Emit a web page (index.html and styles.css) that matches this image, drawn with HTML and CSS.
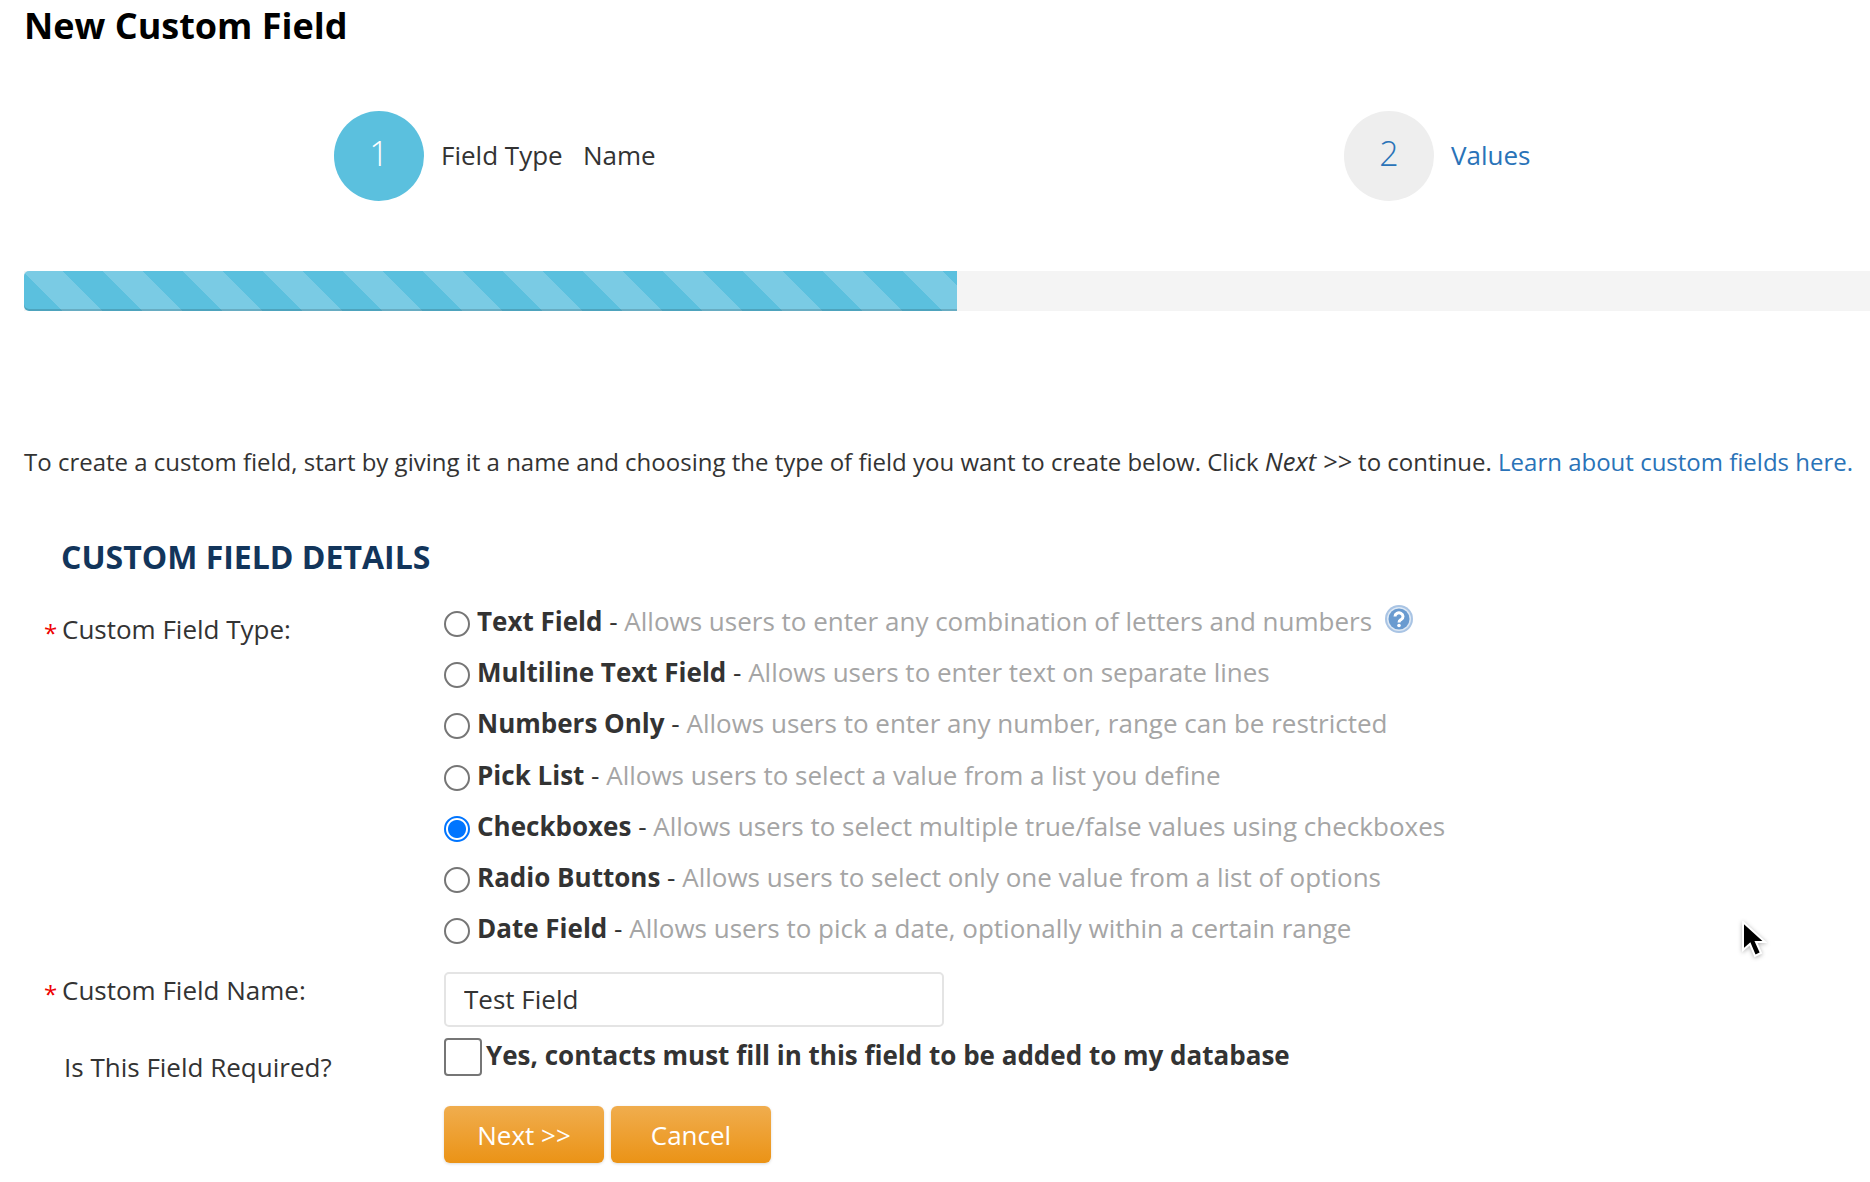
FILE: index.html
```html
<!DOCTYPE html>
<html lang="en">
<head>
  <meta charset="UTF-8">
  <meta name="viewport" content="width=device-width, initial-scale=1.0">
  <title>New Custom Field</title>
  <link rel="stylesheet" href="styles.css">
</head>
<body>
  <h1>New Custom Field</h1>

  <div class="steps">
    <div class="step active">
      <div class="step-num">1</div>
      <div class="step-label">Field Type &nbsp; Name</div>
    </div>
    <div class="step">
      <div class="step-num">2</div>
      <a class="step-label" href="#">Values</a>
    </div>
  </div>

  <div class="progress">
    <div class="progress-bar"></div>
  </div>

  <p class="intro">To create a custom field, start by giving it a name and choosing the type of field you want to create below. Click <em>Next &gt;&gt;</em> to continue. <a href="#">Learn about custom fields here.</a></p>

  <h2>Custom Field Details</h2>

  <form class="details">
    <div class="field-label type-label"><span class="req">*</span>Custom Field Type:</div>
    <div class="type-list">
      <label class="type-row">
        <input type="radio" name="type"><span><b>Text Field</b> - <span class="hint">Allows users to enter any combination of letters and numbers</span></span>
        <svg class="help" width="30" height="30" viewBox="0 0 30 30">
          <circle cx="15" cy="15" r="14" fill="#a9c4e4"/>
          <circle cx="15" cy="15" r="12" fill="#dde8f4"/>
          <circle cx="15" cy="15" r="10.5" fill="#6a9bd0"/>
          <path d="M11 12.5a4 3.6 0 1 1 6.2 3c-1.5 1-2.2 1.2-2.2 3" fill="none" stroke="#fff" stroke-width="3"/>
          <circle cx="15" cy="21.5" r="1.8" fill="#fff"/>
        </svg>
      </label>
      <label class="type-row"><input type="radio" name="type"><span><b>Multiline Text Field</b> - <span class="hint">Allows users to enter text on separate lines</span></span></label>
      <label class="type-row"><input type="radio" name="type"><span><b>Numbers Only</b> - <span class="hint">Allows users to enter any number, range can be restricted</span></span></label>
      <label class="type-row"><input type="radio" name="type"><span><b>Pick List</b> - <span class="hint">Allows users to select a value from a list you define</span></span></label>
      <label class="type-row"><input type="radio" name="type" checked><span><b>Checkboxes</b> - <span class="hint">Allows users to select multiple true/false values using checkboxes</span></span></label>
      <label class="type-row"><input type="radio" name="type"><span><b>Radio Buttons</b> - <span class="hint">Allows users to select only one value from a list of options</span></span></label>
      <label class="type-row"><input type="radio" name="type"><span><b>Date Field</b> - <span class="hint">Allows users to pick a date, optionally within a certain range</span></span></label>
    </div>

    <div class="field-label name-label"><span class="req">*</span>Custom Field Name:</div>
    <input class="name-input" type="text" value="Test Field">

    <div class="field-label required-label">Is This Field Required?</div>
    <label class="required-row"><input type="checkbox"><b>Yes, contacts must fill in this field to be added to my database</b></label>

    <div class="buttons">
      <button type="button">Next &gt;&gt;</button>
      <button type="button">Cancel</button>
    </div>
  </form>

  <!-- mouse pointer caught in the screenshot -->
  <svg class="pointer" width="26" height="38" viewBox="0 0 26 38">
    <path d="M2 1v28l7-6 5 12 6-3-5-11h9z" fill="#000" stroke="#fff" stroke-width="2"/>
  </svg>
</body>
</html>
```

FILE: styles.css
```css
html, body {
  margin: 0;
  padding: 0;
}

body {
  position: relative;
  height: 1182px;
  overflow: hidden;
  background-color: #fff;
  color: #333;
  font-family: 'Open Sans', sans-serif;
  font-size: 26px;
  line-height: 34px;
}

a {
  color: #2a73b8;
  text-decoration: none;
}

h1 {
  margin: 0;
  padding: 6px 0 0 24px;
  height: 44px;
  font-size: 36px;
  line-height: 40px;
  font-weight: 700;
  color: #000;
}

.steps {
  display: flex;
  margin-top: 61px;
  padding-left: 334px;
}

.step {
  display: flex;
  align-items: center;
  gap: 17px;
}

.step.active {
  width: 1010px;
}

.step-label {
  padding-bottom: 2px;
}

.step-num {
  width: 90px;
  height: 90px;
  border-radius: 50%;
  background-color: #eee;
  color: #2a73b8;
  font-size: 34px;
  font-weight: 300;
  line-height: 84px;
  text-align: center;
}

.active .step-num {
  background-color: #5bc0de;
  color: #fff;
}

.progress {
  margin: 70px 0 0 24px;
  height: 40px;
  background-color: #f4f4f4;
}

.progress-bar {
  width: 933px;
  height: 40px;
  border-radius: 5px 0 0 5px;
  background-color: #5bc0de;
  background-image: repeating-linear-gradient(45deg, #5bc0de 0, #5bc0de 27.2px, #7acbe4 27.2px, #7acbe4 55.5px, #5bc0de 55.5px, #5bc0de 56.57px);
  box-shadow: inset 0 -2px 0 rgba(0, 0, 0, 0.15);
}

.intro {
  margin: 134px 0 0 24px;
  font-size: 24px;
  white-space: nowrap;
}

.intro em {
  font-size: 25.5px;
  line-height: 0;
}

h2 {
  margin: 58px 0 0 61px;
  font-size: 32px;
  line-height: 40px;
  font-weight: 700;
  text-transform: uppercase;
  color: #12355b;
}

.details {
  display: grid;
  grid-template-columns: 400px 1fr;
  margin: 18px 0 0 44px;
}

.req {
  display: inline-block;
  width: 18px;
  color: #e00;
  font-size: 24px;
  vertical-align: -3px;
}

.type-list {
  display: flex;
  flex-direction: column;
}

.type-row {
  display: flex;
  align-items: center;
  height: 51.3px;
}

.type-row b,
.required-row b {
  color: #333;
}

.hint {
  color: #a5a5a5;
}

.type-row input {
  appearance: none;
  flex: none;
  width: 26px;
  height: 26px;
  margin: 6px 7px 0 0;
  border: 2px solid #767676;
  border-radius: 50%;
  background-color: #fff;
}

.type-row input:checked {
  border-color: #0075ff;
  background: radial-gradient(circle, #0075ff 0, #0075ff 8.5px, #fff 9.5px);
}

.help {
  margin: -4px 0 0 12px;
}

.type-label {
  padding-top: 17px;
}

.name-label {
  padding-top: 19px;
}

.required-label {
  padding: 23px 0 0 20px;
}

.name-input {
  box-sizing: border-box;
  width: 500px;
  height: 55px;
  margin-top: 17.7px;
  padding: 0 18px;
  border: 2px solid #e4e4e4;
  border-radius: 5px;
  color: #333;
  font-family: 'Open Sans', sans-serif;
  font-size: 26px;
}

.required-row {
  display: flex;
  margin-top: 11.5px;
}

.required-row input {
  appearance: none;
  flex: none;
  width: 38px;
  height: 38px;
  margin: 0 4px 0 0;
  border: 2px solid #767676;
  border-radius: 4px;
  background-color: #fff;
}

.buttons {
  grid-column: 2;
  display: flex;
  gap: 7px;
  margin-top: 22.5px;
}

button {
  width: 160px;
  height: 57px;
  padding: 0;
  border: none;
  border-radius: 6px;
  background: linear-gradient(#f0ad4e, #eb9316);
  box-shadow: 0 1px 3px rgba(0, 0, 0, 0.15);
  color: #fff;
  font-family: 'Open Sans', sans-serif;
  font-size: 26px;
}

.pointer {
  position: absolute;
  left: 1741px;
  top: 921px;
  filter: drop-shadow(0 1px 2px rgba(0, 0, 0, 0.3));
}
```
